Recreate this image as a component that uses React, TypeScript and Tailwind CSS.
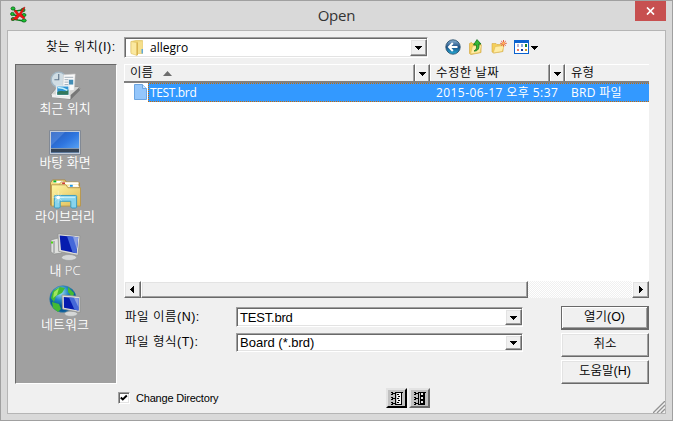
import { useState, type ReactNode } from "react";
import { clsx } from "clsx";

const raised =
  "border border-t-white border-l-white border-r-[#696969] border-b-[#696969] bg-[#f0f0f0] shadow-[inset_-1px_-1px_0_#a0a0a0,inset_1px_1px_0_#e3e3e3]";
const sunken =
  "border border-t-[#a0a0a0] border-l-[#a0a0a0] border-r-white border-b-white bg-white shadow-[inset_1px_1px_0_#696969,inset_-1px_-1px_0_#e3e3e3]";

function AppIcon() {
  return (
    <svg width="17" height="17" viewBox="0 0 17 17" aria-hidden="true">
      <path d="M3 3l3 2 6-1M2 8l5 2 6-1M3 13l5 1 6 1" stroke="#087d18" strokeWidth="1.4" fill="none" />
      <g fill="#16c832" stroke="#075c12" strokeWidth=".8">
        <ellipse cx="3" cy="2.5" rx="2" ry="1.6" />
        <ellipse cx="13" cy="4" rx="2" ry="1.8" />
        <ellipse cx="2.4" cy="8" rx="1.8" ry="1.6" />
        <ellipse cx="14" cy="9" rx="2" ry="1.5" />
        <ellipse cx="3" cy="13" rx="1.8" ry="1.5" />
        <ellipse cx="14" cy="14.5" rx="2.2" ry="1.6" />
      </g>
      <path d="M1 14l4-3 2-2-3-4 2-1 3 4 4-6 2-1-3.5 7 3.5 4-1.5 1-4-3-3 4-2.5-1-2 1z" fill="#f01414" stroke="#a80f08" strokeWidth=".5" />
    </svg>
  );
}

function FolderIcon() {
  return (
    <svg width="15" height="16" viewBox="0 0 15 16" aria-hidden="true">
      <path d="M1 1.5L6 .5h6.5v13H3l-2-1z" fill="#efd574" stroke="#e0c468" strokeWidth=".7" />
      <path d="M1 1.5l6 1.2v12.8l-6-2z" fill="#fbe9a0" stroke="#e0c468" strokeWidth=".6" />
      <path d="M6.5 2.5H8v12.6l-1.5.4z" fill="#d9b450" />
      <path d="M8 1.5h4.5v12H8z" fill="#f5df8c" />
      <path d="M11.5 9H13v4.5h-1.5z" fill="#5fa9d8" />
    </svg>
  );
}

function BackIcon() {
  return (
    <svg width="16" height="16" viewBox="0 0 16 16" aria-hidden="true">
      <defs>
        <linearGradient id="back" x2="0" y2="1">
          <stop stopColor="#8db4d3" />
          <stop offset=".5" stopColor="#1c5086" />
          <stop offset="1" stopColor="#24aed8" />
        </linearGradient>
      </defs>
      <circle cx="8" cy="8" r="7.2" fill="url(#back)" stroke="#2d526f" strokeWidth=".9" />
      <path d="M7.8 4L4 8l3.8 4M4.5 8h8" fill="none" stroke="#fff" strokeWidth="2" />
    </svg>
  );
}

function UpIcon() {
  return (
    <svg width="16" height="16" viewBox="0 0 16 16" aria-hidden="true">
      <path d="M1.5 4.5l2-1 1 1H9l1 1h3v8l-10 2-1.5-1z" fill="#f5cf59" stroke="#d3a844" strokeWidth=".7" />
      <path d="M2.5 15l2-8 9-1-1.5 7.5z" fill="#ffeda5" stroke="#dcb858" strokeWidth=".6" />
      <path d="M6 12c2.3-.8 3-3 2.3-6H5.5L9 .6 13 5h-2.2c.8 4-.8 7.4-4.8 7z" fill="#36b936" stroke="#13701d" strokeWidth=".8" />
    </svg>
  );
}

function NewFolderIcon() {
  return (
    <svg width="16" height="16" viewBox="0 0 16 16" aria-hidden="true">
      <path d="M1 4.5h4l1 1h6v7l-9 1.5-2-1z" fill="#f5cf59" stroke="#d3a844" strokeWidth=".6" />
      <path d="M2.2 14l2-6.5 9-1-2 6z" fill="#ffeda5" stroke="#dcb858" strokeWidth=".6" />
      <path d="M12.5 1v6.6M9.2 4.3h6.6M10.2 2l4.6 4.6M14.8 2l-4.6 4.6" stroke="#e6603d" strokeWidth="1" />
      <circle cx="12.5" cy="4.3" r="1.4" fill="#ffb35d" />
    </svg>
  );
}

function ViewIcon() {
  return (
    <svg width="15" height="14" viewBox="0 0 15 14" shapeRendering="crispEdges" aria-hidden="true">
      <path fill="#0b62cf" d="M0 0h15v14H0z" />
      <path fill="#fff" d="M1 3h13v10H1z" />
      <path fill="#b7b4d5" d="M3 4h2v3H3z" />
      <path fill="#8aa8dc" d="M7 4h2v3H7z" />
      <path fill="#14802b" d="M11 4h2v3h-2z" />
      <path fill="#ed7a60" d="M3 9h2v2H3z" />
      <path fill="#123ba4" d="M7 9h2v2H7z" />
      <path fill="#d29a23" d="M11 9h2v2h-2z" />
    </svg>
  );
}

function RecentIcon() {
  return (
    <svg width="31" height="30" viewBox="0 0 32 31" aria-hidden="true">
      <path d="M1 24l6-7 22-1 2 2-10 11-19-2z" fill="#d5d5d3" stroke="#858585" strokeWidth=".7" />
      <path d="M21 25l9-8 1 3-10 10z" fill="#777" />
      <path d="M2 24l19 1v4L2 27z" fill="#f0f0f0" />
      <circle cx="9" cy="9" r="7.8" fill="#d0dde4" stroke="#a1b6c4" strokeWidth="1.4" />
      <path d="M9 3v6H4.5" stroke="#60778c" strokeWidth="1.2" fill="none" />
      <path d="M14 4l12-1-1 17-12 1z" fill="#fafafa" stroke="#cacaca" strokeWidth=".6" />
      <path d="M15 6.5h9M15 9h4M15 11.5h4M15 14h4" stroke="#9eacb8" />
      <path d="M19.5 9h4.5v5h-4.5z" fill="#438db5" />
      <path d="M6.5 15H20v11H6z" fill="#fff" stroke="#d6dde2" strokeWidth=".6" />
      <path d="M7.5 16H19v8.5H7.5z" fill="#2c93d4" />
      <path d="M7.5 22c4-3 7 1 11.5-3v5.5H7.5z" fill="#34785c" />
      <path d="M8 17c5 0 7 1 10 3" stroke="#c5f1fc" strokeWidth="1.6" fill="none" />
    </svg>
  );
}

function DesktopIcon() {
  return (
    <svg width="32" height="25" viewBox="0 0 32 25" aria-hidden="true">
      <defs>
        <linearGradient id="desktop" x2="1" y2="1">
          <stop stopColor="#2456b4" />
          <stop offset=".5" stopColor="#2e75df" />
          <stop offset="1" stopColor="#62adf9" />
        </linearGradient>
      </defs>
      <path d="M.5.5h31v24H.5z" fill="#c1cbda" stroke="#818995" />
      <path d="M2 2h28v20.5H2z" fill="url(#desktop)" />
      <path d="M2 2h14L2 16z" fill="#77a5ec" opacity=".38" />
      <path d="M2 18.5h28v4H2z" fill="#354457" />
      <path d="M2 18.5h28" stroke="#8599ae" />
    </svg>
  );
}

function LibraryIcon() {
  return (
    <svg width="33" height="30" viewBox="0 0 33 31" aria-hidden="true">
      <defs>
        <linearGradient id="library" x2="1" y2="1">
          <stop stopColor="#fff7a5" />
          <stop offset="1" stopColor="#dfb954" />
        </linearGradient>
      </defs>
      <path d="M1 4l2-3h13l2 3h13v23H1z" fill="#f5df81" stroke="#ad8b4a" />
      <path d="M4 2h10v2H4z" fill="#fff" />
      <path d="M4 1.5h3v2H4z" fill="#08b52b" />
      <path d="M10 6l2-3h18v8H10z" fill="#f9e7a0" stroke="#b69350" strokeWidth=".7" />
      <path d="M13 3.5h17v2H13z" fill="#fff" />
      <path d="M13 3.5h3v2h-3z" fill="#ce3c2f" />
      <path d="M2 6h15l2 3h13v19H2z" fill="url(#library)" stroke="#b79750" />
      <path d="M19 8l2-2h8l2 2z" fill="#fff" />
      <path d="M21 6h3v2h-3z" fill="#1894e8" />
      <path d="M5 29V18q0-1 1-1h21q1 0 1 1v11l-1 1h-4l-1-1v-6H11v6l-1 1H6z" fill="#88d4ec" stroke="#359ac3" />
      <path d="M6.5 19h20" stroke="#d2f6ff" strokeWidth="1.5" opacity=".75" />
      <path d="M9 12v13M3 19h12M5 15l8 8M13 15l-8 8" stroke="#fff" strokeWidth=".5" opacity=".7" />
      <circle cx="9" cy="19" r="1.8" fill="#fff" />
    </svg>
  );
}

function ComputerIcon() {
  return (
    <svg className="mb-[2px]" width="31" height="28" viewBox="0 0 31 28" aria-hidden="true">
      <path d="M1 7l7-2 4 15-8 1-3-2z" fill="#dedfdd" stroke="#8d8f8e" strokeWidth=".7" />
      <path d="M4 8v12" stroke="#868a8c" />
      <path d="M1 8.5h2v2H1z" fill="#48d70c" />
      <ellipse cx="19" cy="24.5" rx="7.5" ry="3" fill="#d5d7d7" stroke="#969999" strokeWidth=".6" />
      <path d="M8 .7l22 2.2-2 19.5-19.3-4z" fill="#ddddda" stroke="#90928f" strokeWidth=".8" />
      <path d="M9.7 2.5l18.5 1.8-1.7 16-15.5-3.3z" fill="#061caf" />
      <path d="M17 3.2l11.2 1.1-1.7 16-4-1z" fill="#4568d9" />
      <path d="M23 3.8l5.2.5-1.3 12z" fill="#8b9fe1" />
    </svg>
  );
}

function NetworkIcon() {
  return (
    <svg width="33" height="32" viewBox="0 0 33 32" aria-hidden="true">
      <defs>
        <radialGradient id="globe" cx=".4" cy=".25">
          <stop stopColor="#a6e3fa" />
          <stop offset=".6" stopColor="#2184c4" />
          <stop offset="1" stopColor="#07599a" />
        </radialGradient>
      </defs>
      <circle cx="14" cy="14" r="13.3" fill="url(#globe)" stroke="#377fa4" strokeWidth=".6" />
      <path d="M4 6l7-4 5 1-3 5-6 3-2 6-3-4zM3 17l7 2 2 5-3 3-5-4zM19 2l6 6-1 5-5-6z" fill="#43ba33" />
      <path d="M5 7l5-4-2 7-4 3z" fill="#9fe65e" />
      <ellipse cx="22" cy="28.8" rx="6.5" ry="2.6" fill="#d5d7d7" stroke="#969999" strokeWidth=".6" />
      <path d="M13 10l18 1.5v16L13.5 24z" fill="#ddddda" stroke="#90928f" strokeWidth=".8" />
      <path d="M14.8 12l14.7 1.2v12.4L15 22.8z" fill="#061caf" />
      <path d="M20 12.5l9.5.7v12.4l-4-.8z" fill="#4568d9" />
      <path d="M25 12.9l4.5.3v9z" fill="#8b9fe1" />
    </svg>
  );
}

function FileIcon() {
  return (
    <svg width="13" height="16" viewBox="0 0 13 16" aria-hidden="true">
      <path d="M.5.5h8l4 4v11H.5z" fill="#94c6fb" stroke="#6ba4e0" />
      <path d="M8.5.5v4h4" fill="#cde6ff" stroke="#6ba4e0" />
    </svg>
  );
}

function Arrow({ direction = "down" }: { direction?: "down" | "left" | "right" }) {
  const paths = {
    down: "M1 3h7v1H1zM2 4h5v1H2zM3 5h3v1H3zM4 6h1v1H4z",
    left: "M6 1v7H5V1zM5 2v5H4V2zM4 3v3H3V3zM3 4v1H2V4z",
    right: "M3 1v7h1V1zM4 2v5h1V2zM5 3v3h1V3zM6 4v1h1V4z",
  };
  return (
    <svg className="shrink-0" width="9" height="9" viewBox="0 0 9 9" shapeRendering="crispEdges" aria-hidden="true">
      <path d={paths[direction]} />
    </svg>
  );
}

function Combo({ children, className }: { children: ReactNode; className?: string }) {
  return (
    <div className={clsx("flex shrink-0 items-center py-px pl-px", sunken, className)}>
      <div className="flex min-w-0 grow items-center">{children}</div>
      <button type="button" aria-label="목록" className={clsx("flex h-full w-[17px] items-center justify-center", raised)}>
        <Arrow />
      </button>
    </div>
  );
}

function HeaderCell({ children, className }: { children: ReactNode; className?: string }) {
  return (
    <div className={clsx("flex h-full shrink-0 items-center border-t border-l border-white border-r border-r-[#696969] bg-[#f0f0f0] shadow-[inset_-1px_0_0_#a0a0a0]", className)}>
      {children}
    </div>
  );
}

const places = [
  { label: "최근 위치", Icon: RecentIcon },
  { label: "바탕 화면", Icon: DesktopIcon },
  { label: "라이브러리", Icon: LibraryIcon },
  { label: "내 PC", Icon: ComputerIcon },
  { label: "네트워크", Icon: NetworkIcon },
];

function Places() {
  return (
    <nav className="flex h-[320px] w-[102px] shrink-0 flex-col border border-t-[#696969] border-l-[#696969] border-r-white border-b-white bg-[#a0a0a0] pt-[4px] pr-[2px] font-['Open_Sans','Noto_Sans_CJK_KR',sans-serif] text-[13px] font-[350] text-white">
      {places.map(({ label, Icon }) => (
        <button key={label} type="button" className="flex h-[54px] shrink-0 flex-col items-center">
          <span className="flex h-[32px] items-end justify-center"><Icon /></span>
          <span className="h-4 leading-[15px] whitespace-pre">{label}</span>
        </button>
      ))}
    </nav>
  );
}

function FileList() {
  return (
    <div className="flex h-[234px] w-[525px] flex-col bg-white font-['Open_Sans','Noto_Sans_CJK_KR',sans-serif] text-[12px]">
      <div className="flex h-[19px] shrink-0 border-b-2 border-[#808080] text-[12.5px] font-[350]">
        <HeaderCell className="w-[291px] gap-[10px] pl-[5px]">
          이름
          <svg width="9" height="5" viewBox="0 0 9 5" aria-hidden="true"><path d="M0 5l4.5-5L9 5z" fill="#6d6d6d" /></svg>
        </HeaderCell>
        <HeaderCell className="w-[15px] justify-center"><Arrow /></HeaderCell>
        <HeaderCell className="w-[120px] pl-[5px] tracking-[0.4px]">수정한 날짜</HeaderCell>
        <HeaderCell className="w-[15px] justify-center"><Arrow /></HeaderCell>
        <HeaderCell className="w-[84px] border-r-0 pl-[5px] shadow-none">유형</HeaderCell>
      </div>
      <div className="flex h-[19px] shrink-0 pl-[10px] text-white">
        <span className="pt-px"><FileIcon /></span>
        <div className="ml-px flex min-w-0 grow items-center border border-r-0 border-dotted border-[#cc6a00] bg-[#3399ff]">
          <span className="w-[287px] pl-px tracking-[-0.35px]">TEST.brd</span>
          <span className="w-[135px] whitespace-nowrap tracking-[0.42px]">2015-06-17 오후 5:37</span>
          <span className="whitespace-nowrap tracking-[0.3px]">BRD 파일</span>
        </div>
      </div>
      <div className="mt-auto flex h-[17px] bg-[repeating-conic-gradient(#ffffff_0%_25%,#f0f0f0_0%_50%)] bg-[length:2px_2px]">
        <button type="button" aria-label="왼쪽" className={clsx("flex w-[17px] items-center justify-center", raised)}><Arrow direction="left" /></button>
        <div className={clsx("w-[387px]", raised)} />
        <button type="button" aria-label="오른쪽" className={clsx("ml-auto flex w-[17px] items-center justify-center", raised)}><Arrow direction="right" /></button>
      </div>
    </div>
  );
}

function DialogButton({ children, primary }: { children: ReactNode; primary?: boolean }) {
  return (
    <button
      type="button"
      className={clsx(
        "flex h-[24px] w-[88px] items-center justify-center pb-px font-[350]",
        primary
          ? "border border-r-2 border-b-2 border-[#696969] bg-[#f0f0f0] shadow-[inset_1px_1px_0_#ffffff,inset_-1px_-1px_0_#a0a0a0]"
          : raised
      )}
    >
      {children}
    </button>
  );
}

function BoardButton({ variant }: { variant: "lines" | "pads" }) {
  return (
    <button type="button" aria-label="보드" className={clsx("flex h-[20px] w-[21px] items-center justify-center border-2 border-t-[#e3e3e3] border-l-[#e3e3e3] bg-[#c0c0c0]", variant === "lines" ? "border-r-black border-b-black" : "border-r-[#696969] border-b-[#696969]")}>
      <svg width="12" height="13" viewBox="0 0 12 13" shapeRendering="crispEdges" aria-hidden="true">
        <path d="M1 1h3v1H1zM1 6h3v1H1zM1 11h3v1H1zM0 0h2v1H0zM0 2h2v1H0zM0 5h2v1H0zM0 7h2v1H0zM0 10h2v1H0zM0 12h2v1H0zM4 0h1v13H4zM5 0h7v1H5zM10 0h1v13h-1zM5 12h6v1H5z" />
        {variant === "lines" ? (
          <>
            <path fill="#f4f4f4" d="M6 1h4v11H6z" />
            <path d="M6 2h2v1H6zM7 4h2v1H7zM6 6h2v1H6zM7 8h2v1H7zM6 10h2v1H6z" />
          </>
        ) : (
          <>
            <path d="M6 1h4v11H6z" />
            <path fill="#e8e8e8" d="M7 1h2v2H7zM7 5h2v2H7zM7 9h2v2H7z" />
          </>
        )}
      </svg>
    </button>
  );
}

export default function App() {
  const [changeDirectory, setChangeDirectory] = useState(true);

  return (
    <main className="flex h-[421px] w-[673px] flex-col overflow-hidden border border-[#a0a0a0] bg-[#d9d9d9] px-[6px] pb-[6px] font-['Liberation_Sans','Noto_Sans_CJK_KR',sans-serif] text-[12px] leading-none text-black">
      <header className="flex h-[29px] shrink-0 items-start">
        <div className="w-[176px] pt-[5px] pl-[3px]"><AppIcon /></div>
        <h1 className="grow pt-[4px] text-center font-['Open_Sans',sans-serif] text-[15px] leading-[20px] tracking-[-0.2px] text-[#333]">Open</h1>
        <div className="flex w-[176px] justify-end">
          <button type="button" aria-label="닫기" className="flex h-[20px] w-[31px] items-center justify-center bg-[#c75050]">
            <svg width="9" height="8" viewBox="0 0 9 8" aria-hidden="true"><path d="M1 .5l7 7M8 .5l-7 7" stroke="#fff" strokeWidth="1.7" /></svg>
          </button>
        </div>
      </header>

      <section className="relative flex min-h-0 grow flex-col border border-[#b5b5b5] bg-[#f0f0f0] pl-[7px]">
        <div className="flex h-[33px] shrink-0 items-start pt-[6px]">
          <span className="h-[21px] w-[109px] pl-[31px] text-[12.5px] leading-[21px] font-[350] tracking-[0.55px] whitespace-nowrap">찾는 위치(I):</span>
          <Combo className="h-[21px] w-[304px]">
            <span className="ml-1 flex w-5 items-center"><FolderIcon /></span>
            <span className="font-['Open_Sans',sans-serif] text-[12px]">allegro</span>
          </Combo>
          <div className="ml-[17px] flex h-[20px] items-center gap-[7px]">
            <BackIcon />
            <UpIcon />
            <NewFolderIcon />
            <span className="flex items-center gap-px"><ViewIcon /><Arrow /></span>
          </div>
        </div>

        <div className="flex gap-[7px]">
          <Places />
          <div className="flex w-[525px] flex-col">
            <FileList />
            <div className="flex justify-between pt-[8px]">
              <div className="pt-px">
                <div className="flex h-[26px] items-start">
                  <span className="w-[112px] pl-px text-[12.5px] leading-[21px] font-[350] tracking-[0.5px]">파일 이름(N):</span>
                  <Combo className="h-[20px] w-[287px]"><span className="pl-[2px] text-[13px] tracking-[-0.2px]">TEST.brd</span></Combo>
                </div>
                <div className="flex items-start">
                  <span className="w-[112px] pl-px text-[12.5px] leading-[18px] font-[350] tracking-[0.5px]">파일 형식(T):</span>
                  <Combo className="h-[19px] w-[287px]"><span className="pl-[2px] text-[13px]">Board (*.brd)</span></Combo>
                </div>
              </div>
              <div className="flex flex-col gap-[3px] text-[12.5px]">
                <DialogButton primary>열기(O)</DialogButton>
                <DialogButton>취소</DialogButton>
                <DialogButton>도움말(H)</DialogButton>
              </div>
            </div>
          </div>
        </div>

        <footer className="flex h-[24px] items-center pt-[4px] pl-[103px]">
          <label className="flex w-[268px] items-center gap-[6px] text-[11px] tracking-[-0.2px]">
            <input type="checkbox" className="sr-only" checked={changeDirectory} onChange={(e) => setChangeDirectory(e.target.checked)} />
            <span className={clsx("flex h-[12px] w-[12px] items-center justify-center", sunken)}>
              {changeDirectory && (
                <svg width="8" height="8" viewBox="0 0 8 8" aria-hidden="true"><path d="M.8 3.5l2 2 4-4" fill="none" stroke="#000" strokeWidth="1.9" /></svg>
              )}
            </span>
            Change Directory
          </label>
          <div className="flex gap-[2px]"><BoardButton variant="lines" /><BoardButton variant="pads" /></div>
        </footer>
        <svg className="absolute right-0 bottom-0" width="12" height="12" viewBox="0 0 12 12" aria-hidden="true">
          <path d="M0 12L12 0M4 12l8-8M8 12l4-4" stroke="#929292" strokeWidth="1.3" />
        </svg>
      </section>
    </main>
  );
}
